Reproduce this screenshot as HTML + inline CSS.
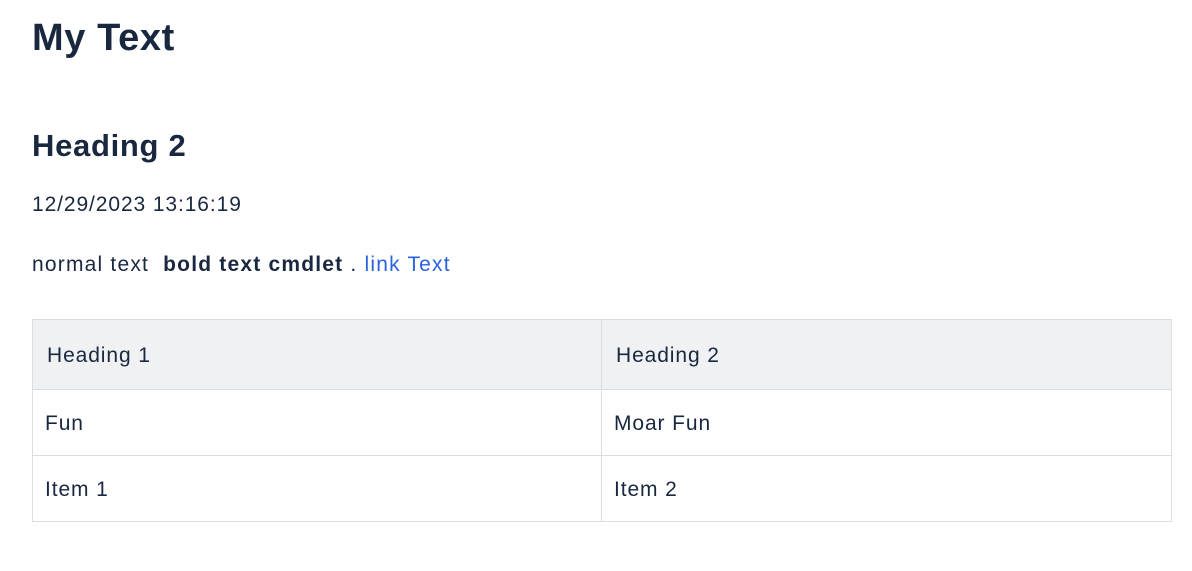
<!DOCTYPE html>
<html><head><style>
body{margin:0;background:#fff;color:#19283f;font-family:"Liberation Sans",sans-serif;font-size:21px;letter-spacing:0.9px}
.a{position:absolute;left:32px;white-space:nowrap}
h1{position:absolute;left:32px;top:17px;margin:0;font-size:38px;font-weight:bold;letter-spacing:0.6px}
h2{position:absolute;left:32px;top:128px;margin:0;font-size:31px;font-weight:bold;letter-spacing:0.7px}
a{color:#2a62e0;text-decoration:none}
table{position:absolute;left:32px;top:319px;width:1140px;border-collapse:collapse}
td,th{border:1px solid #dcdde2;text-align:left;font-weight:normal;padding:3px 12px 0}
th{background:#f0f1f3;height:66px;padding-left:14px}
td{height:62px}
</style></head><body>
<h1>My Text</h1>
<h2>Heading 2</h2>
<div class="a" style="top:193px">12/29/2023 13:16:19</div>
<div class="a" style="top:253px;letter-spacing:1.2px">normal text &nbsp;<b>bold text cmdlet</b> . <a>link Text</a></div>
<table>
<tr><th style="width:542px">Heading 1</th><th>Heading 2</th></tr>
<tr><td>Fun</td><td>Moar Fun</td></tr>
<tr><td>Item 1</td><td>Item 2</td></tr>
</table>
</body></html>
